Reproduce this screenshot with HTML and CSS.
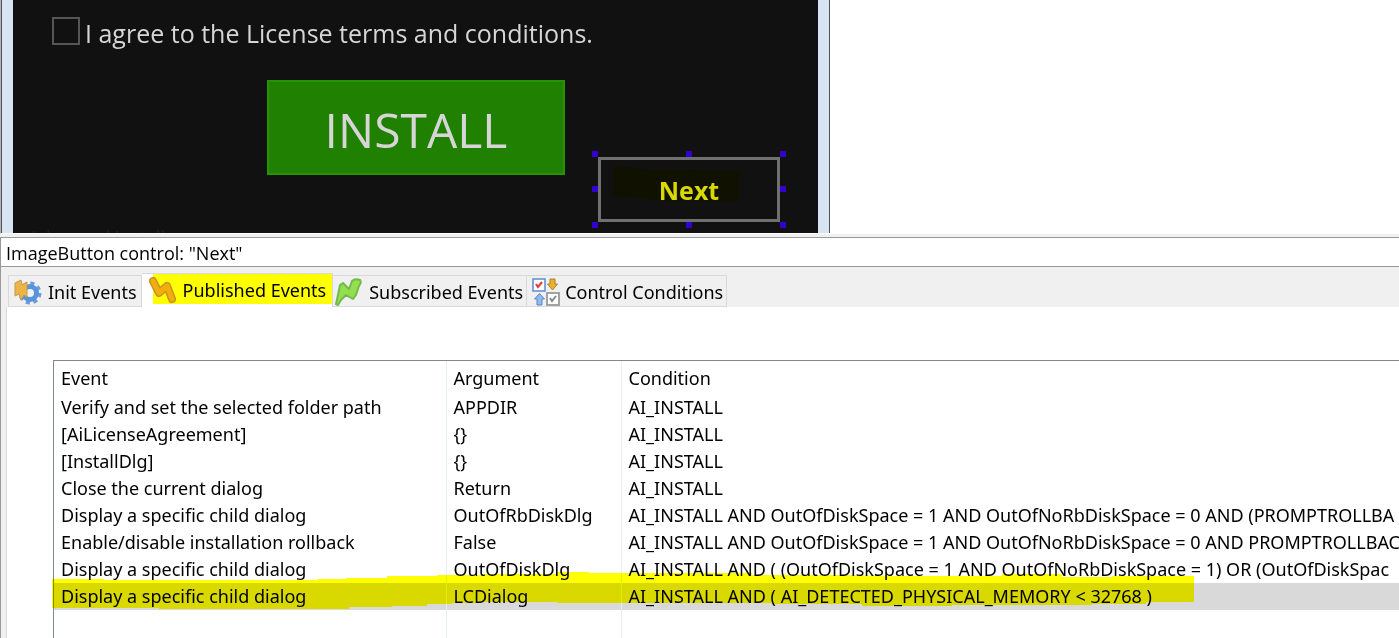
FILE: index.html
```html
<!DOCTYPE html>
<html lang="en">
<head>
<meta charset="utf-8">
<title>ImageButton control: "Next"</title>
<link rel="stylesheet" href="styles.css">
</head>
<body>
<div class="app">
  <section class="stage">
    <div class="dialog">
      <div class="agree">
        <input class="agree-box" type="checkbox" id="agree">
        <label for="agree">I agree to the License terms and conditions.</label>
      </div>
      <button class="install" type="button">INSTALL</button>
      <div class="selection">
        <button class="next" type="button">
          <svg class="next-mark" viewBox="0 0 126 36" aria-hidden="true"><path d="M0 1H16L28 3L126 5V35H50L16 31L0 30Z" fill="#111100"/></svg>
          <span class="next-text">Next</span>
        </button>
        <i class="handle top left"></i><i class="handle top center"></i><i class="handle top right"></i>
        <i class="handle middle left"></i><i class="handle middle right"></i>
        <i class="handle bottom left"></i><i class="handle bottom center"></i><i class="handle bottom right"></i>
      </div>
      <div class="brand">Advanced Installer</div>
    </div>
  </section>

  <section class="panel">
    <h1 class="title">ImageButton control: "Next"</h1>
    <div class="tabs" role="tablist">
      <button class="tab" type="button" role="tab">
        <svg class="icon" viewBox="0 0 28 28" aria-hidden="true">
          <circle cx="16" cy="15" r="9.5" fill="none" stroke="#6a9bdc" stroke-width="4" stroke-dasharray="4 3.46"/>
          <circle cx="16" cy="15" r="6.5" fill="#eef3fa" stroke="#5b93db" stroke-width="5"/>
          <path d="M1 5L7 2L8 7L13 4V19L10 17L7 22L5 16L1 18Z" fill="#edb548" stroke="#c59a45" stroke-width="1" stroke-linejoin="round"/>
        </svg>
        <span>Init Events</span>
      </button>
      <button class="tab active" type="button" role="tab" aria-selected="true">
        <svg class="icon" viewBox="0 0 28 28" aria-hidden="true">
          <g fill="none" stroke-linejoin="round" stroke-linecap="round">
            <path d="M4 5L10 17L18 10L23 23" stroke="#c6932a" stroke-width="8"/>
            <path d="M4 5L10 17L18 10L23 23" stroke="#f4ae0a" stroke-width="5"/>
          </g>
        </svg>
        <span>Published Events</span>
      </button>
      <button class="tab" type="button" role="tab">
        <svg class="icon" viewBox="0 0 28 28" aria-hidden="true">
          <path d="M1 26L3 17L5 7L8 5L14 11L17 3Q20 0 25 2Q27 4 24 8L21 17L18 21L11 17L6 22L3 27Z" fill="#93df50" stroke="#74b94a" stroke-width="2" stroke-linejoin="round"/>
        </svg>
        <span>Subscribed Events</span>
      </button>
      <button class="tab last" type="button" role="tab">
        <svg class="icon" viewBox="0 0 28 28" aria-hidden="true">
          <rect x="1" y="1" width="12" height="12" fill="#fff" stroke="#5b8bd0" stroke-width="1.5"/>
          <path d="M4 6L6 9L10 4" fill="none" stroke="#e04040" stroke-width="2.2"/>
          <path d="M18 1H23V6H25.500L20.500 12L15.500 6H18Z" fill="#edb02f" stroke="#a8802f"/>
          <path d="M5 27V21H2.500L7.500 15.500L12.500 21H10V27Z" fill="#8fb9f0" stroke="#5b86c4"/>
          <rect x="15" y="15" width="12" height="12" fill="#fff" stroke="#999" stroke-width="1.800"/>
          <path d="M18 20L20 23L24 18" fill="none" stroke="#888" stroke-width="2"/>
        </svg>
        <span>Control Conditions</span>
      </button>
    </div>
    <div class="page">
      <div class="list">
        <table class="events">
          <colgroup><col class="col-event"><col class="col-argument"><col></colgroup>
          <thead><tr><th>Event</th><th>Argument</th><th>Condition</th></tr></thead>
          <tbody>
            <tr><td>Verify and set the selected folder path</td><td>APPDIR</td><td>AI_INSTALL</td></tr>
            <tr><td>[AiLicenseAgreement]</td><td>{}</td><td>AI_INSTALL</td></tr>
            <tr><td>[InstallDlg]</td><td>{}</td><td>AI_INSTALL</td></tr>
            <tr><td>Close the current dialog</td><td>Return</td><td>AI_INSTALL</td></tr>
            <tr><td>Display a specific child dialog</td><td>OutOfRbDiskDlg</td><td>AI_INSTALL AND OutOfDiskSpace = 1 AND OutOfNoRbDiskSpace = 0 AND (PROMPTROLLBA</td></tr>
            <tr><td>Enable/disable installation rollback</td><td>False</td><td>AI_INSTALL AND OutOfDiskSpace = 1 AND OutOfNoRbDiskSpace = 0 AND PROMPTROLLBAC</td></tr>
            <tr><td>Display a specific child dialog</td><td>OutOfDiskDlg</td><td>AI_INSTALL AND ( (OutOfDiskSpace = 1 AND OutOfNoRbDiskSpace = 1) OR (OutOfDiskSpac</td></tr>
            <tr class="selected"><td>Display a specific child dialog</td><td>LCDialog</td><td>AI_INSTALL AND ( AI_DETECTED_PHYSICAL_MEMORY &lt; 32768 )</td></tr>
            <tr class="rest"><td></td><td></td><td></td></tr>
          </tbody>
        </table>
        <svg class="marker" viewBox="0 0 1142 40" aria-hidden="true"><path d="M0 8H52V9H265V8H294V7H335V5H385V4H430V3H505V1H537V2H700V4H790L850 5H950V3H1010V6H1060V5H1142V31H1094V33H1040V34H900V35H810V33H720V32H505V31H430V32H400V33H375V35H340V36H297V38H107V37H0Z" fill="#ff0"/></svg>
      </div>
    </div>
  </section>
</div>
</body>
</html>
```
FILE: styles.css
```css
* { box-sizing: border-box; }

body {
  margin: 0;
  background: #fff;
  color: #000;
  font-family: "Noto Sans", "Open Sans", sans-serif;
  font-size: 18px;
}

button { font: inherit; color: inherit; }

.app {
  display: flex;
  flex-direction: column;
  height: 100vh;
  overflow: hidden;
}

.stage {
  flex: none;
  display: flex;
  border-left: 1px solid #b4b4b4;
  border-bottom: 1px solid #fff;
}

.dialog {
  position: relative;
  display: flex;
  flex-direction: column;
  width: 829px;
  height: 233px;
  overflow: hidden;
  padding: 17px 0 0 38px;
  background: #111;
  border-left: 1px solid #505050;
  border-right: 1px solid #505050;
  box-shadow: inset 11px 0 #d7e5f2, inset -11px 0 #d7e5f2;
  color: #d6d6d6;
  font-family: "Open Sans", "Noto Sans", sans-serif;
}

.agree {
  flex: none;
  display: flex;
  align-items: center;
  gap: 5px;
  height: 28px;
  padding-left: 12px;
  font-size: 25px;
  line-height: 28px;
}

.agree label { padding-top: 4px; }

.agree-box {
  appearance: none;
  flex: none;
  width: 28px;
  height: 28px;
  margin: 0;
  border: 2px solid #555;
  background: #111;
}

.install {
  flex: none;
  width: 298px;
  height: 95px;
  margin: 35px 0 0 227px;
  padding: 4px 0 0;
  border: 2px solid #259303;
  background: #1f8002;
  font-size: 48px;
  line-height: 60px;
}

.selection {
  position: absolute;
  left: 590px;
  top: 151px;
  width: 194px;
  height: 77px;
  padding: 6px;
}

.next {
  display: grid;
  place-items: center;
  width: 182px;
  height: 65px;
  padding: 0;
  border: 3px solid #707070;
  background: #111;
  color: #d9d900;
  font-size: 25px;
  font-weight: 700;
}

.next-mark, .next-text { grid-area: 1 / 1; }
.next-mark { width: 126px; margin: 0 26px 12px 0; }
.next-text { line-height: 30px; }

.handle {
  position: absolute;
  width: 6px;
  height: 6px;
  background: #3300cc;
}

.handle.top { top: 0; }
.handle.middle { top: 35px; }
.handle.bottom { bottom: 0; }
.handle.left { left: 0; }
.handle.center { left: 94px; }
.handle.right { right: 0; }

.brand {
  flex: none;
  margin-top: 52px;
  margin-left: -12px;
  color: #222;
  font-size: 18px;
  line-height: 20px;
}

.panel {
  flex: 1;
  display: flex;
  flex-direction: column;
  min-height: 0;
  border-top: 3px solid #f0f0f0;
  background: #f0f0f0;
}

.title {
  flex: none;
  margin: 0;
  padding: 2px 5px 0;
  border: 1px solid #999;
  border-right: 0;
  background: #fff;
  font-family: "Open Sans", "Noto Sans", sans-serif;
  font-size: 18px;
  font-weight: 400;
  line-height: 26px;
}

.tabs {
  flex: none;
  display: flex;
  align-items: flex-end;
  height: 40px;
  padding-left: 7px;
  border-left: 1px solid #999;
}

.tab {
  display: flex;
  align-items: center;
  gap: 6px;
  height: 32px;
  padding: 2px 3px 0 2px;
  border: 1px solid #d9d9d9;
  border-left: 0;
  background: #f0f0f0;
  white-space: nowrap;
  line-height: 26px;
}

.tab:first-child { padding: 2px 4px 0 5px; border-left: 1px solid #d9d9d9; }

.tab.last { padding-left: 5px; gap: 5px; }

.tab.active {
  height: 34px;
  padding: 0 6px 2px 7px;
  border-bottom: 0;
  background: linear-gradient(#ff0, #ff0) 11px 0 / 180px 30px no-repeat #fff;
}

.icon { flex: none; width: 28px; height: 28px; }

.page {
  flex: 1;
  display: flex;
  min-height: 0;
  border-left: 1px solid #999;
  background: linear-gradient(90deg, #f0f0f0 5px, #d9d9d9 5px, #d9d9d9 6px, #fff 6px);
  padding: 53px 0 0 52px;
}

.list {
  position: relative;
  flex: 1;
  min-width: 0;
  border-top: 1px solid #828790;
  border-left: 1px solid #828790;
}

.events {
  width: 100%;
  table-layout: fixed;
  border-collapse: collapse;
  line-height: 27px;
}

.col-event { width: 392px; }
.col-argument { width: 175px; }

.events th, .events td {
  height: 27px;
  padding: 0 0 0 7px;
  border-right: 1px solid #e5effb;
  font-weight: 400;
  text-align: left;
  white-space: nowrap;
}

.events th { height: 33px; padding-top: 2px; }
.events th:last-child, .events td:last-child { border-right: 0; }
.events .selected { background: #d9d9d9; }
.events .rest td { height: 60px; }

.marker {
  position: absolute;
  left: -2px;
  top: 210px;
  width: 1142px;
  height: 40px;
  mix-blend-mode: multiply;
}
```
